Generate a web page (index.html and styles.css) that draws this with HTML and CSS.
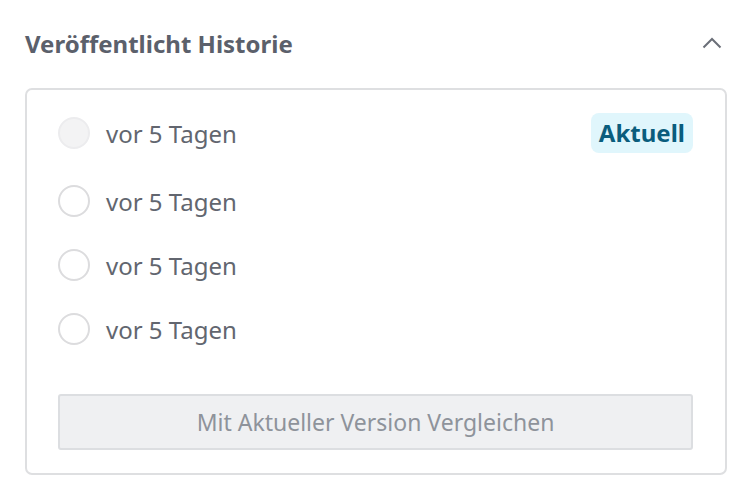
FILE: index.html
```html
<!DOCTYPE html>
<html lang="de">
<head>
    <meta charset="UTF-8">
    <meta name="viewport" content="width=device-width, initial-scale=1.0">
    <title>Veröffentlicht Historie</title>
    <link rel="stylesheet" href="styles.css">
</head>
<body>
    <section class="panel">
        <!-- Kopfzeile mit Einklapp-Pfeil -->
        <div class="panel-head">
            <h2>Veröffentlicht Historie</h2>
            <button class="toggle" aria-label="Einklappen">
                <svg width="20" height="12" viewBox="0 0 20 12">
                    <polyline points="1.5,10.5 10,2 18.5,10.5" fill="none" stroke="#6b6f78" stroke-width="2"/>
                </svg>
            </button>
        </div>

        <div class="history">
            <ul class="versions">
                <li class="version">
                    <span class="radio current"></span>
                    <span class="when">vor 5 Tagen</span>
                    <span class="badge">Aktuell</span>
                </li>
                <li class="version">
                    <span class="radio"></span>
                    <span class="when">vor 5 Tagen</span>
                </li>
                <li class="version">
                    <span class="radio"></span>
                    <span class="when">vor 5 Tagen</span>
                </li>
                <li class="version">
                    <span class="radio"></span>
                    <span class="when">vor 5 Tagen</span>
                </li>
            </ul>
            <button class="compare" disabled>Mit Aktueller Version Vergleichen</button>
        </div>
    </section>
</body>
</html>
```

FILE: styles.css
```css
body {
    margin: 0;
    background: #fff;
    font-family: "Noto Sans", "Open Sans", sans-serif;
    color: #5b606b;
}
.panel {
    padding: 23px 25px 0 25px;
}
.panel-head {
    display: flex;
    align-items: center;
    justify-content: space-between;
    height: 40px;
    margin-bottom: 25px;
}
.panel-head h2 {
    margin: 0;
    font-size: 24px;
    font-weight: 700;
    color: #5b606b;
}
.toggle {
    background: none;
    border: none;
    padding: 0;
    margin-right: 5px;
    display: flex;
}
.history {
    border: 2px solid #dedfe1;
    border-radius: 7px;
    padding: 23px 32px 23px 31px;
}
.versions {
    list-style: none;
    margin: 0;
    padding: 0;
}
.version {
    display: flex;
    align-items: center;
    height: 40px;
    margin-bottom: 24px;
}
.version:first-child {
    margin-bottom: 28px;
}
.radio {
    width: 28px;
    height: 28px;
    border: 2px solid #dcdcde;
    border-radius: 50%;
    flex: none;
}
.radio.current {
    background: #f3f3f4;
    border-color: #ececee;
}
.when {
    margin-left: 16px;
    font-size: 24px;
    color: #62666f;
}
.badge {
    margin-left: auto;
    background: #e0f6fc;
    color: #0a5d7d;
    font-weight: 700;
    font-size: 24px;
    padding: 0 8px;
    height: 40px;
    line-height: 40px;
    border-radius: 8px;
}
.compare {
    display: block;
    width: 100%;
    height: 56px;
    margin-top: 45px;
    background: #eff0f2;
    border: 2px solid #dcdee1;
    border-radius: 3px;
    font-family: inherit;
    font-size: 23px;
    color: #8e939b;
}
```
